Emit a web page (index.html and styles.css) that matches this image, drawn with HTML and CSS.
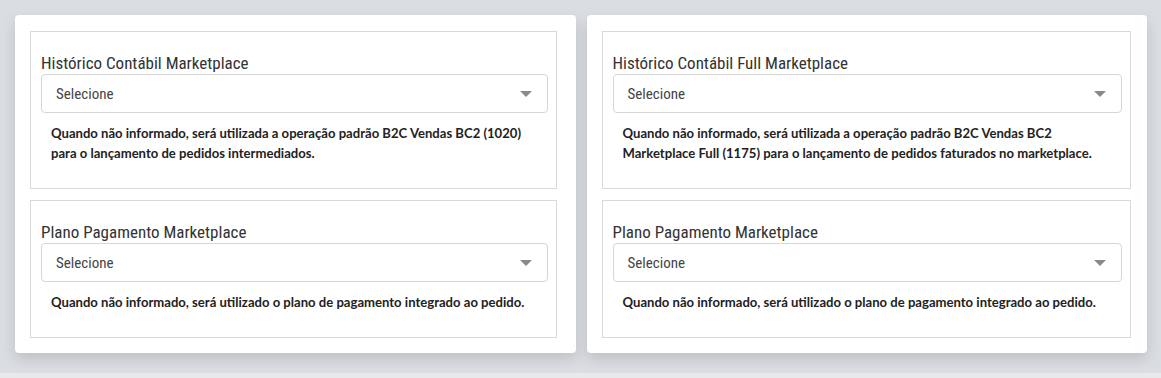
FILE: index.html
```html
<!DOCTYPE html>
<html>
<head>
<title>Configuração Marketplace</title>
<link rel="stylesheet" href="styles.css">
</head>
<body>
<div class="page">
  <div class="card">
    <div class="group">
      <label class="label">Histórico Contábil Marketplace</label>
      <div class="select"><span>Selecione</span><i class="caret"></i></div>
      <p class="help">Quando não informado, será utilizada a operação padrão B2C Vendas BC2 (1020)<br>para o lançamento de pedidos intermediados.</p>
    </div>
    <div class="group">
      <label class="label">Plano Pagamento Marketplace</label>
      <div class="select"><span>Selecione</span><i class="caret"></i></div>
      <p class="help">Quando não informado, será utilizado o plano de pagamento integrado ao pedido.</p>
    </div>
  </div>
  <div class="card card-full">
    <div class="group">
      <label class="label">Histórico Contábil Full Marketplace</label>
      <div class="select"><span>Selecione</span><i class="caret"></i></div>
      <p class="help">Quando não informado, será utilizada a operação padrão B2C Vendas BC2<br>Marketplace Full (1175) para o lançamento de pedidos faturados no marketplace.</p>
    </div>
    <div class="group">
      <label class="label">Plano Pagamento Marketplace</label>
      <div class="select"><span>Selecione</span><i class="caret"></i></div>
      <p class="help">Quando não informado, será utilizado o plano de pagamento integrado ao pedido.</p>
    </div>
  </div>
</div>
</body>
</html>
```
FILE: styles.css
```css
body {
	margin: 0;
	background: #e8e9ea;
	font-family: "Roboto Condensed", "DejaVu Sans Condensed", sans-serif;
	color: #222;
}

/* two cards side by side on the grey panel */
.page {
	display: grid;
	grid-template-columns: 1fr 1fr;
	gap: 11px;
	padding: 15px 14px 20px 15px;
	background: #dadde1;
}

.card {
	background: #fff;
	border-radius: 4px;
	box-shadow: 0 6px 14px rgba(0, 0, 0, 0.13);
	padding: 16px 19px 15px 15px;
	display: flex;
	flex-direction: column;
	gap: 11px;
}

.card-full {
	padding-right: 16px;
}

.group {
	border: 1px solid #d9d9d9;
	padding: 20px 8px 25px 10px;
}

.label {
	display: block;
	font-size: 17px;
	line-height: 22px;
	color: #333;
}

.select {
	height: 37px;
	border: 1px solid #d6d6d6;
	border-radius: 4px;
	display: flex;
	align-items: center;
	justify-content: space-between;
	padding: 0 14px;
	font-size: 15px;
	color: #444;
}

.caret {
	width: 0;
	height: 0;
	border-left: 6px solid transparent;
	border-right: 6px solid transparent;
	border-top: 6px solid #8a8a8a;
	margin-right: 1px;
}

.help {
	margin: 10px 0 0 10px;
	font-family: Lato, "Liberation Sans", sans-serif;
	font-size: 13.1px;
	line-height: 20px;
	font-weight: bold;
	color: #222;
	white-space: nowrap;
}
```
